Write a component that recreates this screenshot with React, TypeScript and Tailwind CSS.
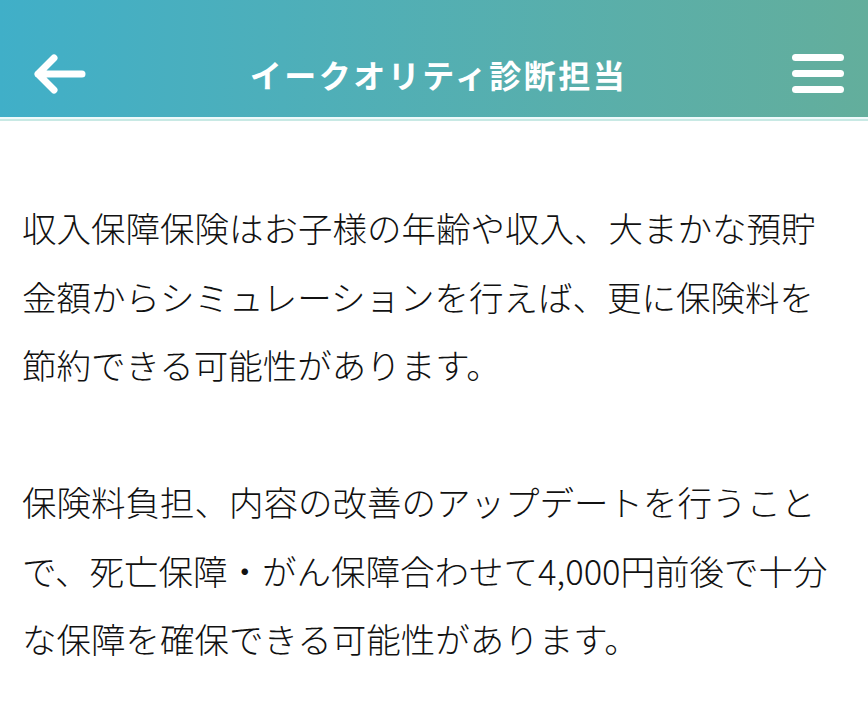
import React from 'react';

const paragraphs: string[][] = [
  [
    '収入保障保険はお子様の年齢や収入、大まかな預貯',
    '金額からシミュレーションを行えば、更に保険料を',
    '節約できる可能性があります。',
  ],
  [
    '保険料負担、内容の改善のアップデートを行うこと',
    'で、死亡保障・がん保障合わせて4,000円前後で十分',
    'な保障を確保できる可能性があります。',
  ],
];

function BackArrow() {
  return (
    <svg width="56" height="44" viewBox="0 0 56 44" fill="none">
      <path
        d="M5 22 H49 M5 22 L21 6 M5 22 L21 38"
        stroke="white"
        strokeWidth="7"
        strokeLinecap="round"
        strokeLinejoin="round"
      />
    </svg>
  );
}

function MenuIcon() {
  return (
    <div className="flex flex-col gap-[9px]">
      <span className="block h-[7px] w-[52px] rounded-full bg-white" />
      <span className="block h-[7px] w-[52px] rounded-full bg-white" />
      <span className="block h-[7px] w-[52px] rounded-full bg-white" />
    </div>
  );
}

export default function App() {
  return (
    <div
      className="min-h-screen w-full bg-white"
      style={{ fontFamily: '"Noto Sans CJK JP", "Noto Sans", sans-serif' }}
    >
      <header className="h-[117px] bg-gradient-to-r from-[#40afc8] to-[#63ae9c] pt-[30px] flex items-center pl-[33px] pr-[24px]">
        <div className="w-[70px] flex items-center">
          <BackArrow />
        </div>
        <h1 className="flex-1 text-center text-white font-bold text-[32px] tracking-[2.5px]">
          イークオリティ診断担当
        </h1>
        <div className="w-[70px] flex justify-end">
          <MenuIcon />
        </div>
      </header>
      <div className="h-[2px] bg-[#eefafb]" />
      <div className="h-[2px] bg-[#c8e9e4]" />

      <main className="pt-[72px] pl-[22px] pr-[10px]">
        {paragraphs.map((lines, i) => (
          <p
            key={i}
            className={`text-[34.5px] leading-[68.5px] font-light text-[#111] whitespace-nowrap ${i > 0 ? 'mt-[68.5px]' : ''}`}
          >
            {lines.map((line, j) => (
              <span key={j} className="block">
                {line}
              </span>
            ))}
          </p>
        ))}
      </main>
    </div>
  );
}
